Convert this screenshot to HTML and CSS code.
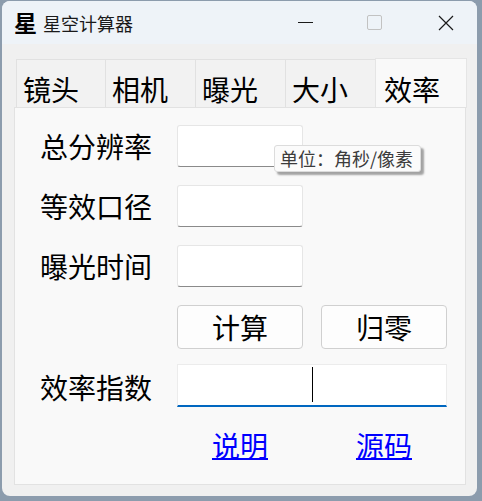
FILE: index.html
```html
<!DOCTYPE html>
<html lang="zh-CN">
<head>
    <meta charset="UTF-8">
    <title>星空计算器</title>

    <link rel="stylesheet" href="styles.css">
</head>
<body>
<div class="window">
    <div class="titlebar">
        <span class="app-icon">星</span>
        <span class="title">星空计算器</span>
        <div class="controls">
            <div class="ctl ctl-min"><span></span></div>
            <div class="ctl ctl-max"><span></span></div>
            <div class="ctl ctl-close">
                <svg width="16" height="16" viewBox="0 0 16 16">
                    <path d="M1 1 L15 15 M15 1 L1 15" stroke="#1a1a1a" stroke-width="1.2" fill="none"/>
                </svg>
            </div>
        </div>
    </div>

    <div class="client">
        <div class="tabs">
            <div class="tab">镜头</div>
            <div class="tab">相机</div>
            <div class="tab">曝光</div>
            <div class="tab">大小</div>
            <div class="tab active">效率</div>
        </div>

        <div class="panel">
            <div class="form">
                <label class="label" for="res">总分辨率</label>
                <input class="field" type="text" id="res">

                <label class="label row2" for="aperture">等效口径</label>
                <input class="field row2" type="text" id="aperture">

                <label class="label row3" for="exposure">曝光时间</label>
                <input class="field row3" type="text" id="exposure">

                <button class="btn btn-calc" type="button">计算</button>
                <button class="btn btn-reset" type="button">归零</button>

                <div class="label row5">效率指数</div>
                <div class="result"><span class="caret"></span></div>

                <a class="link link-help" href="#">说明</a>
                <a class="link link-src" href="#">源码</a>
            </div>

            <!-- tooltip of the first field -->
            <div class="tooltip">单位：角秒/像素</div>
        </div>
    </div>
</div>
</body>
</html>
```

FILE: styles.css
```css
body {
    margin: 0;
    background-color: #8c9cad;
    font-family: "Noto Sans CJK SC", "Noto Sans", sans-serif;
}

.window {
    margin: 1px 0 0 2px;
    width: 475px;
    height: 495px;
    border-radius: 8px;
    background-color: #f0f0f0;
    overflow: hidden;
}

.titlebar {
    height: 43px;
    display: flex;
    align-items: center;
    background-color: #eef3f8;
    padding-left: 12px;
}

.app-icon {
    font-size: 23px;
    font-weight: bold;
    line-height: 1;
    color: #000;
    margin-top: -1px;
}

.title {
    font-size: 18px;
    line-height: 1;
    margin-left: 6px;
    color: #1a1a1a;
}

.controls {
    margin-left: auto;
    display: flex;
    height: 100%;
}

.ctl {
    display: flex;
    justify-content: center;
    align-items: center;
}

.ctl-min {
    width: 59px;
}

.ctl-min span {
    display: block;
    width: 15px;
    height: 1px;
    background-color: #1a1a1a;
}

.ctl-max {
    width: 79px;
}

.ctl-max span {
    display: block;
    width: 13px;
    height: 13px;
    border: 1px solid #c2c2c2;
    border-radius: 2px;
}

.ctl-close {
    width: 63px;
}

.client {
    padding: 0 10px 0 12px;
}

.tabs {
    margin-top: 13px;
    height: 50px;
    display: flex;
    align-items: flex-end;
    padding-left: 2px;
}

.tab {
    box-sizing: border-box;
    width: 91px;
    height: 48px;
    margin-left: -1px;
    border: 1px solid #e1e1e1;
    border-bottom: none;
    background-color: #f2f2f2;
    font-size: 28px;
    line-height: 1;
    padding: 15px 0 0 6px;
    color: #000;
}

.tab:first-child {
    margin-left: 0;
    width: 90px;
}

.tab.active {
    width: 92px;
    height: 50px;
    background-color: #f9f9f9;
    border-color: #e5e5e5;
    padding: 16px 0 0 8px;
    position: relative;
    top: 1px;
}

.panel {
    box-sizing: border-box;
    position: relative;
    width: 452px;
    height: 378px;
    border: 1px solid #e2e2e2;
    background-color: #f9f9f9;
}

.form {
    display: grid;
    grid-template-columns: 137px 126px 18px 126px;
    grid-template-rows: 42px 42px 42px 44px 43px 34px;
    row-gap: 18px;
    padding: 17px 0 0 25px;
}

.label {
    grid-column: 1;
    display: flex;
    align-items: center;
    font-size: 28px;
    line-height: 1;
    color: #000;
}

.field {
    grid-column: 2;
    box-sizing: border-box;
    width: 126px;
    height: 42px;
    border: 1px solid #e6e6e6;
    border-bottom: 1px solid #8a8a8a;
    border-radius: 3px;
    background-color: #fff;
    font-size: 18px;
    outline: none;
}

.row2 {
    grid-row: 2;
}

.row3 {
    grid-row: 3;
}

.row5 {
    grid-row: 5;
    margin-top: -3px;
}

.btn {
    grid-row: 4;
    box-sizing: border-box;
    height: 44px;
    border: 1px solid #d0d0d0;
    border-radius: 4px;
    background-color: #fdfdfd;
    font-family: "Noto Sans CJK SC", sans-serif;
    font-size: 28px;
    line-height: 1;
    color: #000;
    padding: 0;
}

.btn-calc {
    grid-column: 2;
}

.btn-reset {
    grid-column: 4;
}

.result {
    grid-row: 5;
    grid-column: 2 / 5;
    margin-top: -3px;
    box-sizing: border-box;
    height: 43px;
    border: 1px solid #ececec;
    border-bottom: 2px solid #0067c0;
    background-color: #fff;
    display: flex;
    justify-content: center;
    padding-top: 2px;
}

.caret {
    display: block;
    width: 1px;
    height: 35px;
    background-color: #000;
}

.link {
    grid-row: 6;
    justify-self: center;
    font-size: 28px;
    line-height: 34px;
    color: #0000ff;
    text-decoration: underline;
    text-decoration-thickness: 2px;
}

.link-help {
    grid-column: 2;
}

.link-src {
    grid-column: 4;
}

.tooltip {
    position: absolute;
    left: 259px;
    top: 37px;
    box-sizing: border-box;
    width: 147px;
    height: 27px;
    border: 1px solid #dcdcdc;
    border-radius: 3px;
    background-color: #fbfbfb;
    box-shadow: 3px 3px 2px rgba(0, 0, 0, 0.35);
    font-size: 18px;
    line-height: 25px;
    padding-left: 5px;
    color: #3c3c3c;
    white-space: nowrap;
}
```
